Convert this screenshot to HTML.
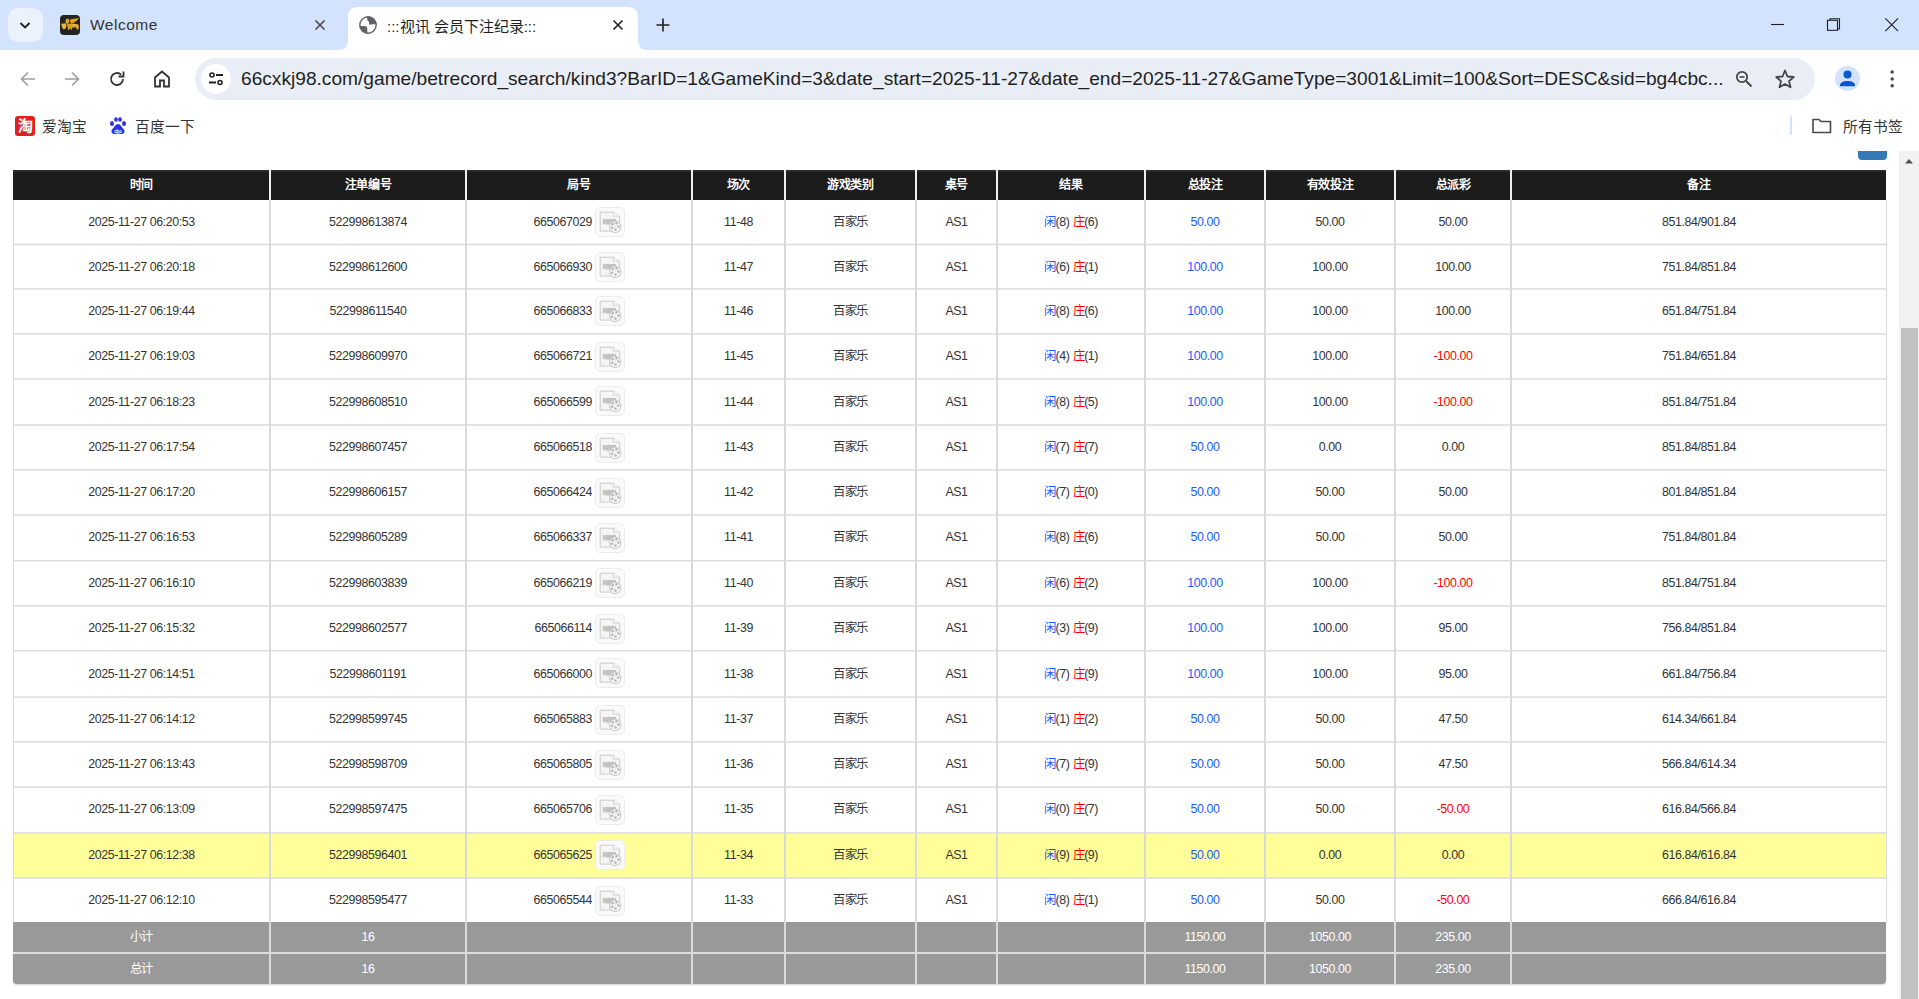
<!DOCTYPE html>
<html lang="zh-CN"><head><meta charset="utf-8"><title>:::视讯 会员下注纪录:::</title>
<style>
html,body{margin:0;padding:0;width:1919px;height:999px;overflow:hidden;background:#fff;font-family:"Liberation Sans",sans-serif;}
.a{position:absolute}
#tabstrip{position:absolute;left:0;top:0;width:1919px;height:50px;background:#d3e3fd}
#toolbar{position:absolute;left:0;top:50px;width:1921px;height:55px;background:#fff;border-radius:10px 11px 0 0}
#bm{position:absolute;left:0;top:105px;width:1919px;height:46px;background:#fff}
.tabtxt{position:absolute;font-size:15px;color:#1f1f1f;white-space:nowrap}
.c,.hc,.fc{position:absolute;text-align:center;white-space:nowrap;font-size:12.4px;letter-spacing:-0.4px;color:#333}
.hc{color:#fff;font-weight:bold;font-size:12px}
.fc{color:#fff}
.th{position:absolute}
.bl{color:#1a5cff}
.rd{color:#ff0000}
.jn{display:inline-block;vertical-align:middle;line-height:14px}
.vb{position:absolute;width:28px;height:28px;border:1px solid #ececec;border-radius:5px;background:#fafafa}
.vb svg{position:absolute;left:-1px;top:-1px}
</style></head><body>
<div id="tabstrip"></div>
<!-- dropdown -->
<div class="a" style="left:8px;top:8px;width:35px;height:34px;border-radius:10px;background:#ebf1fd"></div>
<svg class="a" style="left:17px;top:17px" width="16" height="16" viewBox="0 0 16 16"><path d="M3.5 6l4.5 4.5L12.5 6" fill="none" stroke="#1f1f1f" stroke-width="1.8"/></svg>
<!-- inactive tab -->
<div class="a" style="left:60px;top:15px;width:20px;height:20px;border-radius:4px;background:#232323;overflow:hidden"><svg width="20" height="20" viewBox="0 0 20 20"><path d="M9.5 4.8Q14 3.2 18.8 3.3Q16.5 7.2 11 8.8z" fill="#e3a51c"/><ellipse cx="7.4" cy="6.2" rx="1.9" ry="2.6" fill="#d8a62a"/><path d="M1.2 8.8L6.4 8.3L6.4 12Q4.8 14.8 3.6 14.6Q1.4 12.6 1.2 8.8z" fill="#e8b234"/><path d="M7 9.2Q12 7.8 18.2 9.4Q19.6 11 18.8 13L18 14.8H16.8L16.3 12.6H12.4L11.8 14.8H10.7L10.3 12.3L9.3 14.8H8z" fill="#d9a22a"/><path d="M12 10.2Q15 9.4 17.5 10.3" stroke="#f5d060" stroke-width="0.8" fill="none"/></svg></div>
<div class="tabtxt" style="left:90px;top:16px;font-size:15.5px;letter-spacing:0.5px;color:#333">Welcome</div>
<svg class="a" style="left:313px;top:18px" width="14" height="14" viewBox="0 0 14 14"><path d="M2.5 2.5l9 9M11.5 2.5l-9 9" stroke="#474747" stroke-width="1.6"/></svg>
<!-- active tab -->
<svg class="a" style="left:338px;top:7px" width="310" height="44" viewBox="0 0 310 44"><path d="M0 43 Q10 43 10 33 V10 Q10 0 20 0 H290 Q300 0 300 10 V33 Q300 43 310 43 V44 H0 Z" fill="#fff"/></svg>
<svg class="a" style="left:359px;top:16px" width="18" height="18" viewBox="0 0 18 18"><circle cx="9" cy="9" r="8.9" fill="#5f6368"/><circle cx="9" cy="9" r="7.5" fill="#fff"/><path d="M8.3 0.5C8.1 2.6 7.8 4.2 9.1 5.1C10.4 5.9 10.4 7.3 9.8 8.4C11.2 8.9 12.6 8.2 13.9 8.2L17.6 8.2A8.6 8.6 0 0 0 8.3 0.5z" fill="#5f6368"/><path d="M0.4 10.1C3.2 9.9 6.1 9.8 7.6 10.6C8.6 11.4 8.2 13.6 8.4 17.6A8.6 8.6 0 0 1 0.4 10.1z" fill="#5f6368"/></svg>
<div class="tabtxt" style="left:387px;top:15px;font-size:15px">:::视讯 会员下注纪录:::</div>
<svg class="a" style="left:611px;top:18px" width="14" height="14" viewBox="0 0 14 14"><path d="M2.5 2.5l9 9M11.5 2.5l-9 9" stroke="#1f1f1f" stroke-width="1.6"/></svg>
<svg class="a" style="left:655px;top:17px" width="16" height="16" viewBox="0 0 16 16"><path d="M8 1.5v13M1.5 8h13" stroke="#1f1f1f" stroke-width="1.6"/></svg>
<!-- window controls -->
<svg class="a" style="left:1770px;top:16px" width="16" height="16" viewBox="0 0 16 16"><path d="M1 8.5h13" stroke="#1f1f1f" stroke-width="1.1"/></svg>
<svg class="a" style="left:1825px;top:16px" width="16" height="16" viewBox="0 0 16 16"><rect x="2.5" y="4.3" width="10" height="10" fill="none" stroke="#1f1f1f" stroke-width="1.1"/><path d="M5 4.3V2.7h9.5v10.3h-2" fill="none" stroke="#1f1f1f" stroke-width="1.1"/></svg>
<svg class="a" style="left:1884px;top:17px" width="16" height="16" viewBox="0 0 16 16"><path d="M1.3 1.3l12.8 12.8M14.1 1.3L1.3 14.1" stroke="#1f1f1f" stroke-width="1.1"/></svg>

<div id="toolbar"></div>
<svg class="a" style="left:18px;top:69px" width="20" height="20" viewBox="0 0 20 20"><path d="M17 10H4M10 3.5L3.5 10 10 16.5" fill="none" stroke="#a0a0a0" stroke-width="1.7"/></svg>
<svg class="a" style="left:62px;top:69px" width="20" height="20" viewBox="0 0 20 20"><path d="M3 10h13M10 3.5l6.5 6.5L10 16.5" fill="none" stroke="#a0a0a0" stroke-width="1.7"/></svg>
<svg class="a" style="left:107px;top:69px" width="20" height="20" viewBox="0 0 20 20"><path d="M16 10a6 6 0 1 1-1.8-4.3" fill="none" stroke="#333" stroke-width="1.8"/><path d="M16.5 2.5v5h-5" fill="none" stroke="#333" stroke-width="1.8"/></svg>
<svg class="a" style="left:152px;top:69px" width="20" height="20" viewBox="0 0 20 20"><path d="M3 17.5V8.5L10 2.5l7 6v9h-5v-6H8v6z" fill="none" stroke="#333" stroke-width="1.8" stroke-linejoin="miter"/></svg>
<!-- omnibox -->
<div class="a" style="left:195px;top:58px;width:1620px;height:42px;border-radius:21px;background:#e9eef6"></div>
<div class="a" style="left:201px;top:64px;width:30px;height:30px;border-radius:15px;background:#fff"></div>
<svg class="a" style="left:206px;top:69px" width="20" height="20" viewBox="0 0 20 20"><circle cx="6" cy="6" r="2" fill="none" stroke="#1f1f1f" stroke-width="1.6"/><path d="M10 6h7M3 13.5h7" stroke="#1f1f1f" stroke-width="1.8"/><circle cx="14" cy="13.5" r="2" fill="none" stroke="#1f1f1f" stroke-width="1.6"/></svg>
<div class="a" id="url" style="left:241px;top:67px;font-size:19.15px;color:#1f1f1f;white-space:nowrap;line-height:24px">66cxkj98.com/game/betrecord_search/kind3?BarID=1&amp;GameKind=3&amp;date_start=2025-11-27&amp;date_end=2025-11-27&amp;GameType=3001&amp;Limit=100&amp;Sort=DESC&amp;sid=bg4cbc...</div>
<svg class="a" style="left:1734px;top:69px" width="20" height="20" viewBox="0 0 20 20"><circle cx="8" cy="8" r="5.2" fill="none" stroke="#444" stroke-width="1.8"/><path d="M12 12l5.5 5.5" stroke="#444" stroke-width="2"/><path d="M5.5 8h5" stroke="#444" stroke-width="1.6"/></svg>
<svg class="a" style="left:1774px;top:68px" width="22" height="22" viewBox="0 0 22 22"><path d="M11 2.5l2.5 6 6.3.5-4.8 4.1 1.5 6.2L11 16l-5.5 3.3 1.5-6.2L2.2 9l6.3-.5z" fill="none" stroke="#444" stroke-width="1.8" stroke-linejoin="round"/></svg>
<div class="a" style="left:1835px;top:66px;width:25px;height:25px;border-radius:13px;background:#d3e3fd;overflow:hidden"><svg width="25" height="25" viewBox="0 0 25 25"><circle cx="12.5" cy="8.6" r="4" fill="#0b57d0"/><path d="M5 20.3v-1c0-2.8 3.6-4.3 7.5-4.3s7.5 1.5 7.5 4.3v1z" fill="#0b57d0"/></svg></div>
<svg class="a" style="left:1882px;top:69px" width="20" height="20" viewBox="0 0 20 20"><circle cx="10.2" cy="3" r="1.7" fill="#444"/><circle cx="10.2" cy="10" r="1.7" fill="#444"/><circle cx="10.2" cy="16.7" r="1.7" fill="#444"/></svg>

<div id="bm"></div>
<div class="a" style="left:15px;top:116px;width:20px;height:20px;border-radius:3px;background:#e02020;color:#fff;font-size:15px;font-weight:bold;line-height:20px;text-align:center">淘</div>
<div class="a" style="left:42px;top:118px;font-size:14.7px;color:#333;line-height:18px">爱淘宝</div>
<svg class="a" style="left:108px;top:116px" width="20" height="20" viewBox="0 0 20 20"><ellipse cx="4" cy="7.5" rx="2" ry="2.5" fill="#2932e1"/><ellipse cx="8" cy="3.5" rx="1.8" ry="2.3" fill="#2932e1"/><ellipse cx="12" cy="3.5" rx="1.8" ry="2.3" fill="#2932e1"/><ellipse cx="16" cy="7.5" rx="2" ry="2.5" fill="#2932e1"/><path d="M10 8c-2.5 0-3.5 3-5.5 5s-1 5 2 5c1.5 0 2.2-.5 3.5-.5s2 .5 3.5.5c3 0 4-3 2-5s-3-5-5.5-5z" fill="#2932e1"/><text x="10" y="16.5" font-size="6" fill="#fff" text-anchor="middle" font-family="Liberation Sans" font-weight="bold">du</text></svg>
<div class="a" style="left:135px;top:118px;font-size:14.7px;color:#333;line-height:18px">百度一下</div>
<div class="a" style="left:1790px;top:116px;width:2px;height:19px;border-radius:1px;background:#d3e3fd"></div>
<svg class="a" style="left:1811px;top:116px" width="22" height="20" viewBox="0 0 22 20"><path d="M2 3.5h6l2 2h9.5v11H2z" fill="none" stroke="#474747" stroke-width="1.6" stroke-linejoin="round"/></svg>
<div class="a" style="left:1843px;top:118px;font-size:14.7px;color:#333;line-height:18px">所有书签</div>

<!-- page -->
<div class="a" style="left:1858px;top:151px;width:29px;height:9px;background:#337ab7;border-radius:0 0 4px 4px"></div>
<!-- scrollbar -->
<div class="a" style="left:1899px;top:151px;width:20px;height:848px;background:#f1f1f1"></div>
<svg class="a" style="left:1904px;top:156px" width="10" height="10" viewBox="0 0 10 10"><path d="M1 7.5h8L5 3z" fill="#505050"/></svg>
<div class="a" style="left:1901px;top:328px;width:17px;height:671px;background:#c1c1c1"></div>
<div class="th" style="left:13px;top:170px;width:1873px;height:30px;background:#1c1c1c"></div>
<div style="position:absolute;left:13px;top:170px;width:1873px;height:2px;background:#2b2b2b"></div>
<div class="hc" style="left:14px;width:255px;top:170px;height:30px;line-height:30px">时间</div>
<div class="hc" style="left:271px;width:194px;top:170px;height:30px;line-height:30px">注单编号</div>
<div class="hc" style="left:467px;width:224px;top:170px;height:30px;line-height:30px">局号</div>
<div class="hc" style="left:693px;width:91px;top:170px;height:30px;line-height:30px">场次</div>
<div class="hc" style="left:786px;width:129px;top:170px;height:30px;line-height:30px">游戏类别</div>
<div class="hc" style="left:917px;width:79px;top:170px;height:30px;line-height:30px">桌号</div>
<div class="hc" style="left:998px;width:146px;top:170px;height:30px;line-height:30px">结果</div>
<div class="hc" style="left:1146px;width:118px;top:170px;height:30px;line-height:30px">总投注</div>
<div class="hc" style="left:1266px;width:128px;top:170px;height:30px;line-height:30px">有效投注</div>
<div class="hc" style="left:1396px;width:114px;top:170px;height:30px;line-height:30px">总派彩</div>
<div class="hc" style="left:1512px;width:374px;top:170px;height:30px;line-height:30px">备注</div>
<div style="position:absolute;left:269px;top:170px;width:2px;height:30px;background:#efefef"></div>
<div style="position:absolute;left:465px;top:170px;width:2px;height:30px;background:#efefef"></div>
<div style="position:absolute;left:691px;top:170px;width:2px;height:30px;background:#efefef"></div>
<div style="position:absolute;left:784px;top:170px;width:2px;height:30px;background:#efefef"></div>
<div style="position:absolute;left:915px;top:170px;width:2px;height:30px;background:#efefef"></div>
<div style="position:absolute;left:996px;top:170px;width:2px;height:30px;background:#efefef"></div>
<div style="position:absolute;left:1144px;top:170px;width:2px;height:30px;background:#efefef"></div>
<div style="position:absolute;left:1264px;top:170px;width:2px;height:30px;background:#efefef"></div>
<div style="position:absolute;left:1394px;top:170px;width:2px;height:30px;background:#efefef"></div>
<div style="position:absolute;left:1510px;top:170px;width:2px;height:30px;background:#efefef"></div>
<div style="position:absolute;left:13px;top:200px;width:1873px;height:722px;background:#ffffff"></div>
<div style="position:absolute;left:13px;top:833px;width:1873px;height:45px;background:#ffff99"></div>
<div class="c" style="left:14px;width:255px;top:199.60px;height:44.90px;line-height:44.90px">2025-11-27 06:20:53</div>
<div class="c" style="left:271px;width:194px;top:199.60px;height:44.90px;line-height:44.90px">522998613874</div>
<div class="c" style="left:467px;width:125px;text-align:right;top:199.60px;height:44.90px;line-height:44.90px">665067029</div>
<div class="vb" style="left:595px;top:207px"><svg width="30" height="30" viewBox="0 0 30 30"><path d="M5.2 5.2h13.3l6.2 4.3v14.6h-19.5z" fill="#f5f5f5" stroke="#cbcbcb" stroke-width="1"/><path d="M18.5 5.2v4h6.2" fill="#fafafa" stroke="#d3d3d3" stroke-width="1"/><path d="M7.8 11.4l2.8 1.4v3.3l-2.8 1.6z" fill="#c2c2c2"/><path d="M10.4 11.9h3l0.5-0.4 0.5 0.4h3l0.5-0.4 0.5 0.4h2.6v5.5h-10.6z" fill="#c2c2c2"/><circle cx="20.2" cy="19.9" r="5.7" fill="#f7f7f7" stroke="#c6c6c6" stroke-width="1"/><circle cx="17.8" cy="17.2" r="1.35" fill="#b9b9b9"/><circle cx="21.4" cy="16.3" r="1.35" fill="#b9b9b9"/><circle cx="23.4" cy="19.6" r="1.35" fill="#b9b9b9"/><circle cx="20.5" cy="22.6" r="1.35" fill="#b9b9b9"/><circle cx="17.1" cy="20.8" r="1.35" fill="#b9b9b9"/><circle cx="20.1" cy="19.5" r="0.5" fill="#cfcfcf"/></svg></div>
<div class="c" style="left:693px;width:91px;top:199.60px;height:44.90px;line-height:44.90px">11-48</div>
<div class="c" style="left:786px;width:129px;top:199.60px;height:44.90px;line-height:44.90px">百家乐</div>
<div class="c" style="left:917px;width:79px;top:199.60px;height:44.90px;line-height:44.90px">AS1</div>
<div class="c" style="left:998px;width:146px;top:199.60px;height:44.90px;line-height:44.90px"><span class="bl">闲</span>(8) <span class="rd">庄</span>(6)</div>
<div class="c" style="left:1146px;width:118px;top:199.60px;height:44.90px;line-height:44.90px"><span class="bl">50.00</span></div>
<div class="c" style="left:1266px;width:128px;top:199.60px;height:44.90px;line-height:44.90px">50.00</div>
<div class="c" style="left:1396px;width:114px;top:199.60px;height:44.90px;line-height:44.90px">50.00</div>
<div class="c" style="left:1512px;width:374px;top:199.60px;height:44.90px;line-height:44.90px">851.84/901.84</div>
<div class="c" style="left:14px;width:255px;top:244.50px;height:44.40px;line-height:44.40px">2025-11-27 06:20:18</div>
<div class="c" style="left:271px;width:194px;top:244.50px;height:44.40px;line-height:44.40px">522998612600</div>
<div class="c" style="left:467px;width:125px;text-align:right;top:244.50px;height:44.40px;line-height:44.40px">665066930</div>
<div class="vb" style="left:595px;top:252px"><svg width="30" height="30" viewBox="0 0 30 30"><path d="M5.2 5.2h13.3l6.2 4.3v14.6h-19.5z" fill="#f5f5f5" stroke="#cbcbcb" stroke-width="1"/><path d="M18.5 5.2v4h6.2" fill="#fafafa" stroke="#d3d3d3" stroke-width="1"/><path d="M7.8 11.4l2.8 1.4v3.3l-2.8 1.6z" fill="#c2c2c2"/><path d="M10.4 11.9h3l0.5-0.4 0.5 0.4h3l0.5-0.4 0.5 0.4h2.6v5.5h-10.6z" fill="#c2c2c2"/><circle cx="20.2" cy="19.9" r="5.7" fill="#f7f7f7" stroke="#c6c6c6" stroke-width="1"/><circle cx="17.8" cy="17.2" r="1.35" fill="#b9b9b9"/><circle cx="21.4" cy="16.3" r="1.35" fill="#b9b9b9"/><circle cx="23.4" cy="19.6" r="1.35" fill="#b9b9b9"/><circle cx="20.5" cy="22.6" r="1.35" fill="#b9b9b9"/><circle cx="17.1" cy="20.8" r="1.35" fill="#b9b9b9"/><circle cx="20.1" cy="19.5" r="0.5" fill="#cfcfcf"/></svg></div>
<div class="c" style="left:693px;width:91px;top:244.50px;height:44.40px;line-height:44.40px">11-47</div>
<div class="c" style="left:786px;width:129px;top:244.50px;height:44.40px;line-height:44.40px">百家乐</div>
<div class="c" style="left:917px;width:79px;top:244.50px;height:44.40px;line-height:44.40px">AS1</div>
<div class="c" style="left:998px;width:146px;top:244.50px;height:44.40px;line-height:44.40px"><span class="bl">闲</span>(6) <span class="rd">庄</span>(1)</div>
<div class="c" style="left:1146px;width:118px;top:244.50px;height:44.40px;line-height:44.40px"><span class="bl">100.00</span></div>
<div class="c" style="left:1266px;width:128px;top:244.50px;height:44.40px;line-height:44.40px">100.00</div>
<div class="c" style="left:1396px;width:114px;top:244.50px;height:44.40px;line-height:44.40px">100.00</div>
<div class="c" style="left:1512px;width:374px;top:244.50px;height:44.40px;line-height:44.40px">751.84/851.84</div>
<div class="c" style="left:14px;width:255px;top:288.90px;height:45.00px;line-height:45.00px">2025-11-27 06:19:44</div>
<div class="c" style="left:271px;width:194px;top:288.90px;height:45.00px;line-height:45.00px">522998611540</div>
<div class="c" style="left:467px;width:125px;text-align:right;top:288.90px;height:45.00px;line-height:45.00px">665066833</div>
<div class="vb" style="left:595px;top:296px"><svg width="30" height="30" viewBox="0 0 30 30"><path d="M5.2 5.2h13.3l6.2 4.3v14.6h-19.5z" fill="#f5f5f5" stroke="#cbcbcb" stroke-width="1"/><path d="M18.5 5.2v4h6.2" fill="#fafafa" stroke="#d3d3d3" stroke-width="1"/><path d="M7.8 11.4l2.8 1.4v3.3l-2.8 1.6z" fill="#c2c2c2"/><path d="M10.4 11.9h3l0.5-0.4 0.5 0.4h3l0.5-0.4 0.5 0.4h2.6v5.5h-10.6z" fill="#c2c2c2"/><circle cx="20.2" cy="19.9" r="5.7" fill="#f7f7f7" stroke="#c6c6c6" stroke-width="1"/><circle cx="17.8" cy="17.2" r="1.35" fill="#b9b9b9"/><circle cx="21.4" cy="16.3" r="1.35" fill="#b9b9b9"/><circle cx="23.4" cy="19.6" r="1.35" fill="#b9b9b9"/><circle cx="20.5" cy="22.6" r="1.35" fill="#b9b9b9"/><circle cx="17.1" cy="20.8" r="1.35" fill="#b9b9b9"/><circle cx="20.1" cy="19.5" r="0.5" fill="#cfcfcf"/></svg></div>
<div class="c" style="left:693px;width:91px;top:288.90px;height:45.00px;line-height:45.00px">11-46</div>
<div class="c" style="left:786px;width:129px;top:288.90px;height:45.00px;line-height:45.00px">百家乐</div>
<div class="c" style="left:917px;width:79px;top:288.90px;height:45.00px;line-height:45.00px">AS1</div>
<div class="c" style="left:998px;width:146px;top:288.90px;height:45.00px;line-height:45.00px"><span class="bl">闲</span>(8) <span class="rd">庄</span>(6)</div>
<div class="c" style="left:1146px;width:118px;top:288.90px;height:45.00px;line-height:45.00px"><span class="bl">100.00</span></div>
<div class="c" style="left:1266px;width:128px;top:288.90px;height:45.00px;line-height:45.00px">100.00</div>
<div class="c" style="left:1396px;width:114px;top:288.90px;height:45.00px;line-height:45.00px">100.00</div>
<div class="c" style="left:1512px;width:374px;top:288.90px;height:45.00px;line-height:45.00px">651.84/751.84</div>
<div class="c" style="left:14px;width:255px;top:333.90px;height:45.00px;line-height:45.00px">2025-11-27 06:19:03</div>
<div class="c" style="left:271px;width:194px;top:333.90px;height:45.00px;line-height:45.00px">522998609970</div>
<div class="c" style="left:467px;width:125px;text-align:right;top:333.90px;height:45.00px;line-height:45.00px">665066721</div>
<div class="vb" style="left:595px;top:342px"><svg width="30" height="30" viewBox="0 0 30 30"><path d="M5.2 5.2h13.3l6.2 4.3v14.6h-19.5z" fill="#f5f5f5" stroke="#cbcbcb" stroke-width="1"/><path d="M18.5 5.2v4h6.2" fill="#fafafa" stroke="#d3d3d3" stroke-width="1"/><path d="M7.8 11.4l2.8 1.4v3.3l-2.8 1.6z" fill="#c2c2c2"/><path d="M10.4 11.9h3l0.5-0.4 0.5 0.4h3l0.5-0.4 0.5 0.4h2.6v5.5h-10.6z" fill="#c2c2c2"/><circle cx="20.2" cy="19.9" r="5.7" fill="#f7f7f7" stroke="#c6c6c6" stroke-width="1"/><circle cx="17.8" cy="17.2" r="1.35" fill="#b9b9b9"/><circle cx="21.4" cy="16.3" r="1.35" fill="#b9b9b9"/><circle cx="23.4" cy="19.6" r="1.35" fill="#b9b9b9"/><circle cx="20.5" cy="22.6" r="1.35" fill="#b9b9b9"/><circle cx="17.1" cy="20.8" r="1.35" fill="#b9b9b9"/><circle cx="20.1" cy="19.5" r="0.5" fill="#cfcfcf"/></svg></div>
<div class="c" style="left:693px;width:91px;top:333.90px;height:45.00px;line-height:45.00px">11-45</div>
<div class="c" style="left:786px;width:129px;top:333.90px;height:45.00px;line-height:45.00px">百家乐</div>
<div class="c" style="left:917px;width:79px;top:333.90px;height:45.00px;line-height:45.00px">AS1</div>
<div class="c" style="left:998px;width:146px;top:333.90px;height:45.00px;line-height:45.00px"><span class="bl">闲</span>(4) <span class="rd">庄</span>(1)</div>
<div class="c" style="left:1146px;width:118px;top:333.90px;height:45.00px;line-height:45.00px"><span class="bl">100.00</span></div>
<div class="c" style="left:1266px;width:128px;top:333.90px;height:45.00px;line-height:45.00px">100.00</div>
<div class="c" style="left:1396px;width:114px;top:333.90px;height:45.00px;line-height:45.00px"><span class="rd">-100.00</span></div>
<div class="c" style="left:1512px;width:374px;top:333.90px;height:45.00px;line-height:45.00px">751.84/651.84</div>
<div class="c" style="left:14px;width:255px;top:378.90px;height:46.10px;line-height:46.10px">2025-11-27 06:18:23</div>
<div class="c" style="left:271px;width:194px;top:378.90px;height:46.10px;line-height:46.10px">522998608510</div>
<div class="c" style="left:467px;width:125px;text-align:right;top:378.90px;height:46.10px;line-height:46.10px">665066599</div>
<div class="vb" style="left:595px;top:386px"><svg width="30" height="30" viewBox="0 0 30 30"><path d="M5.2 5.2h13.3l6.2 4.3v14.6h-19.5z" fill="#f5f5f5" stroke="#cbcbcb" stroke-width="1"/><path d="M18.5 5.2v4h6.2" fill="#fafafa" stroke="#d3d3d3" stroke-width="1"/><path d="M7.8 11.4l2.8 1.4v3.3l-2.8 1.6z" fill="#c2c2c2"/><path d="M10.4 11.9h3l0.5-0.4 0.5 0.4h3l0.5-0.4 0.5 0.4h2.6v5.5h-10.6z" fill="#c2c2c2"/><circle cx="20.2" cy="19.9" r="5.7" fill="#f7f7f7" stroke="#c6c6c6" stroke-width="1"/><circle cx="17.8" cy="17.2" r="1.35" fill="#b9b9b9"/><circle cx="21.4" cy="16.3" r="1.35" fill="#b9b9b9"/><circle cx="23.4" cy="19.6" r="1.35" fill="#b9b9b9"/><circle cx="20.5" cy="22.6" r="1.35" fill="#b9b9b9"/><circle cx="17.1" cy="20.8" r="1.35" fill="#b9b9b9"/><circle cx="20.1" cy="19.5" r="0.5" fill="#cfcfcf"/></svg></div>
<div class="c" style="left:693px;width:91px;top:378.90px;height:46.10px;line-height:46.10px">11-44</div>
<div class="c" style="left:786px;width:129px;top:378.90px;height:46.10px;line-height:46.10px">百家乐</div>
<div class="c" style="left:917px;width:79px;top:378.90px;height:46.10px;line-height:46.10px">AS1</div>
<div class="c" style="left:998px;width:146px;top:378.90px;height:46.10px;line-height:46.10px"><span class="bl">闲</span>(8) <span class="rd">庄</span>(5)</div>
<div class="c" style="left:1146px;width:118px;top:378.90px;height:46.10px;line-height:46.10px"><span class="bl">100.00</span></div>
<div class="c" style="left:1266px;width:128px;top:378.90px;height:46.10px;line-height:46.10px">100.00</div>
<div class="c" style="left:1396px;width:114px;top:378.90px;height:46.10px;line-height:46.10px"><span class="rd">-100.00</span></div>
<div class="c" style="left:1512px;width:374px;top:378.90px;height:46.10px;line-height:46.10px">851.84/751.84</div>
<div class="c" style="left:14px;width:255px;top:425.00px;height:44.90px;line-height:44.90px">2025-11-27 06:17:54</div>
<div class="c" style="left:271px;width:194px;top:425.00px;height:44.90px;line-height:44.90px">522998607457</div>
<div class="c" style="left:467px;width:125px;text-align:right;top:425.00px;height:44.90px;line-height:44.90px">665066518</div>
<div class="vb" style="left:595px;top:433px"><svg width="30" height="30" viewBox="0 0 30 30"><path d="M5.2 5.2h13.3l6.2 4.3v14.6h-19.5z" fill="#f5f5f5" stroke="#cbcbcb" stroke-width="1"/><path d="M18.5 5.2v4h6.2" fill="#fafafa" stroke="#d3d3d3" stroke-width="1"/><path d="M7.8 11.4l2.8 1.4v3.3l-2.8 1.6z" fill="#c2c2c2"/><path d="M10.4 11.9h3l0.5-0.4 0.5 0.4h3l0.5-0.4 0.5 0.4h2.6v5.5h-10.6z" fill="#c2c2c2"/><circle cx="20.2" cy="19.9" r="5.7" fill="#f7f7f7" stroke="#c6c6c6" stroke-width="1"/><circle cx="17.8" cy="17.2" r="1.35" fill="#b9b9b9"/><circle cx="21.4" cy="16.3" r="1.35" fill="#b9b9b9"/><circle cx="23.4" cy="19.6" r="1.35" fill="#b9b9b9"/><circle cx="20.5" cy="22.6" r="1.35" fill="#b9b9b9"/><circle cx="17.1" cy="20.8" r="1.35" fill="#b9b9b9"/><circle cx="20.1" cy="19.5" r="0.5" fill="#cfcfcf"/></svg></div>
<div class="c" style="left:693px;width:91px;top:425.00px;height:44.90px;line-height:44.90px">11-43</div>
<div class="c" style="left:786px;width:129px;top:425.00px;height:44.90px;line-height:44.90px">百家乐</div>
<div class="c" style="left:917px;width:79px;top:425.00px;height:44.90px;line-height:44.90px">AS1</div>
<div class="c" style="left:998px;width:146px;top:425.00px;height:44.90px;line-height:44.90px"><span class="bl">闲</span>(7) <span class="rd">庄</span>(7)</div>
<div class="c" style="left:1146px;width:118px;top:425.00px;height:44.90px;line-height:44.90px"><span class="bl">50.00</span></div>
<div class="c" style="left:1266px;width:128px;top:425.00px;height:44.90px;line-height:44.90px">0.00</div>
<div class="c" style="left:1396px;width:114px;top:425.00px;height:44.90px;line-height:44.90px">0.00</div>
<div class="c" style="left:1512px;width:374px;top:425.00px;height:44.90px;line-height:44.90px">851.84/851.84</div>
<div class="c" style="left:14px;width:255px;top:469.90px;height:45.10px;line-height:45.10px">2025-11-27 06:17:20</div>
<div class="c" style="left:271px;width:194px;top:469.90px;height:45.10px;line-height:45.10px">522998606157</div>
<div class="c" style="left:467px;width:125px;text-align:right;top:469.90px;height:45.10px;line-height:45.10px">665066424</div>
<div class="vb" style="left:595px;top:478px"><svg width="30" height="30" viewBox="0 0 30 30"><path d="M5.2 5.2h13.3l6.2 4.3v14.6h-19.5z" fill="#f5f5f5" stroke="#cbcbcb" stroke-width="1"/><path d="M18.5 5.2v4h6.2" fill="#fafafa" stroke="#d3d3d3" stroke-width="1"/><path d="M7.8 11.4l2.8 1.4v3.3l-2.8 1.6z" fill="#c2c2c2"/><path d="M10.4 11.9h3l0.5-0.4 0.5 0.4h3l0.5-0.4 0.5 0.4h2.6v5.5h-10.6z" fill="#c2c2c2"/><circle cx="20.2" cy="19.9" r="5.7" fill="#f7f7f7" stroke="#c6c6c6" stroke-width="1"/><circle cx="17.8" cy="17.2" r="1.35" fill="#b9b9b9"/><circle cx="21.4" cy="16.3" r="1.35" fill="#b9b9b9"/><circle cx="23.4" cy="19.6" r="1.35" fill="#b9b9b9"/><circle cx="20.5" cy="22.6" r="1.35" fill="#b9b9b9"/><circle cx="17.1" cy="20.8" r="1.35" fill="#b9b9b9"/><circle cx="20.1" cy="19.5" r="0.5" fill="#cfcfcf"/></svg></div>
<div class="c" style="left:693px;width:91px;top:469.90px;height:45.10px;line-height:45.10px">11-42</div>
<div class="c" style="left:786px;width:129px;top:469.90px;height:45.10px;line-height:45.10px">百家乐</div>
<div class="c" style="left:917px;width:79px;top:469.90px;height:45.10px;line-height:45.10px">AS1</div>
<div class="c" style="left:998px;width:146px;top:469.90px;height:45.10px;line-height:45.10px"><span class="bl">闲</span>(7) <span class="rd">庄</span>(0)</div>
<div class="c" style="left:1146px;width:118px;top:469.90px;height:45.10px;line-height:45.10px"><span class="bl">50.00</span></div>
<div class="c" style="left:1266px;width:128px;top:469.90px;height:45.10px;line-height:45.10px">50.00</div>
<div class="c" style="left:1396px;width:114px;top:469.90px;height:45.10px;line-height:45.10px">50.00</div>
<div class="c" style="left:1512px;width:374px;top:469.90px;height:45.10px;line-height:45.10px">801.84/851.84</div>
<div class="c" style="left:14px;width:255px;top:515.00px;height:45.80px;line-height:45.80px">2025-11-27 06:16:53</div>
<div class="c" style="left:271px;width:194px;top:515.00px;height:45.80px;line-height:45.80px">522998605289</div>
<div class="c" style="left:467px;width:125px;text-align:right;top:515.00px;height:45.80px;line-height:45.80px">665066337</div>
<div class="vb" style="left:595px;top:523px"><svg width="30" height="30" viewBox="0 0 30 30"><path d="M5.2 5.2h13.3l6.2 4.3v14.6h-19.5z" fill="#f5f5f5" stroke="#cbcbcb" stroke-width="1"/><path d="M18.5 5.2v4h6.2" fill="#fafafa" stroke="#d3d3d3" stroke-width="1"/><path d="M7.8 11.4l2.8 1.4v3.3l-2.8 1.6z" fill="#c2c2c2"/><path d="M10.4 11.9h3l0.5-0.4 0.5 0.4h3l0.5-0.4 0.5 0.4h2.6v5.5h-10.6z" fill="#c2c2c2"/><circle cx="20.2" cy="19.9" r="5.7" fill="#f7f7f7" stroke="#c6c6c6" stroke-width="1"/><circle cx="17.8" cy="17.2" r="1.35" fill="#b9b9b9"/><circle cx="21.4" cy="16.3" r="1.35" fill="#b9b9b9"/><circle cx="23.4" cy="19.6" r="1.35" fill="#b9b9b9"/><circle cx="20.5" cy="22.6" r="1.35" fill="#b9b9b9"/><circle cx="17.1" cy="20.8" r="1.35" fill="#b9b9b9"/><circle cx="20.1" cy="19.5" r="0.5" fill="#cfcfcf"/></svg></div>
<div class="c" style="left:693px;width:91px;top:515.00px;height:45.80px;line-height:45.80px">11-41</div>
<div class="c" style="left:786px;width:129px;top:515.00px;height:45.80px;line-height:45.80px">百家乐</div>
<div class="c" style="left:917px;width:79px;top:515.00px;height:45.80px;line-height:45.80px">AS1</div>
<div class="c" style="left:998px;width:146px;top:515.00px;height:45.80px;line-height:45.80px"><span class="bl">闲</span>(8) <span class="rd">庄</span>(6)</div>
<div class="c" style="left:1146px;width:118px;top:515.00px;height:45.80px;line-height:45.80px"><span class="bl">50.00</span></div>
<div class="c" style="left:1266px;width:128px;top:515.00px;height:45.80px;line-height:45.80px">50.00</div>
<div class="c" style="left:1396px;width:114px;top:515.00px;height:45.80px;line-height:45.80px">50.00</div>
<div class="c" style="left:1512px;width:374px;top:515.00px;height:45.80px;line-height:45.80px">751.84/801.84</div>
<div class="c" style="left:14px;width:255px;top:560.80px;height:45.10px;line-height:45.10px">2025-11-27 06:16:10</div>
<div class="c" style="left:271px;width:194px;top:560.80px;height:45.10px;line-height:45.10px">522998603839</div>
<div class="c" style="left:467px;width:125px;text-align:right;top:560.80px;height:45.10px;line-height:45.10px">665066219</div>
<div class="vb" style="left:595px;top:568px"><svg width="30" height="30" viewBox="0 0 30 30"><path d="M5.2 5.2h13.3l6.2 4.3v14.6h-19.5z" fill="#f5f5f5" stroke="#cbcbcb" stroke-width="1"/><path d="M18.5 5.2v4h6.2" fill="#fafafa" stroke="#d3d3d3" stroke-width="1"/><path d="M7.8 11.4l2.8 1.4v3.3l-2.8 1.6z" fill="#c2c2c2"/><path d="M10.4 11.9h3l0.5-0.4 0.5 0.4h3l0.5-0.4 0.5 0.4h2.6v5.5h-10.6z" fill="#c2c2c2"/><circle cx="20.2" cy="19.9" r="5.7" fill="#f7f7f7" stroke="#c6c6c6" stroke-width="1"/><circle cx="17.8" cy="17.2" r="1.35" fill="#b9b9b9"/><circle cx="21.4" cy="16.3" r="1.35" fill="#b9b9b9"/><circle cx="23.4" cy="19.6" r="1.35" fill="#b9b9b9"/><circle cx="20.5" cy="22.6" r="1.35" fill="#b9b9b9"/><circle cx="17.1" cy="20.8" r="1.35" fill="#b9b9b9"/><circle cx="20.1" cy="19.5" r="0.5" fill="#cfcfcf"/></svg></div>
<div class="c" style="left:693px;width:91px;top:560.80px;height:45.10px;line-height:45.10px">11-40</div>
<div class="c" style="left:786px;width:129px;top:560.80px;height:45.10px;line-height:45.10px">百家乐</div>
<div class="c" style="left:917px;width:79px;top:560.80px;height:45.10px;line-height:45.10px">AS1</div>
<div class="c" style="left:998px;width:146px;top:560.80px;height:45.10px;line-height:45.10px"><span class="bl">闲</span>(6) <span class="rd">庄</span>(2)</div>
<div class="c" style="left:1146px;width:118px;top:560.80px;height:45.10px;line-height:45.10px"><span class="bl">100.00</span></div>
<div class="c" style="left:1266px;width:128px;top:560.80px;height:45.10px;line-height:45.10px">100.00</div>
<div class="c" style="left:1396px;width:114px;top:560.80px;height:45.10px;line-height:45.10px"><span class="rd">-100.00</span></div>
<div class="c" style="left:1512px;width:374px;top:560.80px;height:45.10px;line-height:45.10px">851.84/751.84</div>
<div class="c" style="left:14px;width:255px;top:605.90px;height:44.90px;line-height:44.90px">2025-11-27 06:15:32</div>
<div class="c" style="left:271px;width:194px;top:605.90px;height:44.90px;line-height:44.90px">522998602577</div>
<div class="c" style="left:467px;width:125px;text-align:right;top:605.90px;height:44.90px;line-height:44.90px">665066114</div>
<div class="vb" style="left:595px;top:614px"><svg width="30" height="30" viewBox="0 0 30 30"><path d="M5.2 5.2h13.3l6.2 4.3v14.6h-19.5z" fill="#f5f5f5" stroke="#cbcbcb" stroke-width="1"/><path d="M18.5 5.2v4h6.2" fill="#fafafa" stroke="#d3d3d3" stroke-width="1"/><path d="M7.8 11.4l2.8 1.4v3.3l-2.8 1.6z" fill="#c2c2c2"/><path d="M10.4 11.9h3l0.5-0.4 0.5 0.4h3l0.5-0.4 0.5 0.4h2.6v5.5h-10.6z" fill="#c2c2c2"/><circle cx="20.2" cy="19.9" r="5.7" fill="#f7f7f7" stroke="#c6c6c6" stroke-width="1"/><circle cx="17.8" cy="17.2" r="1.35" fill="#b9b9b9"/><circle cx="21.4" cy="16.3" r="1.35" fill="#b9b9b9"/><circle cx="23.4" cy="19.6" r="1.35" fill="#b9b9b9"/><circle cx="20.5" cy="22.6" r="1.35" fill="#b9b9b9"/><circle cx="17.1" cy="20.8" r="1.35" fill="#b9b9b9"/><circle cx="20.1" cy="19.5" r="0.5" fill="#cfcfcf"/></svg></div>
<div class="c" style="left:693px;width:91px;top:605.90px;height:44.90px;line-height:44.90px">11-39</div>
<div class="c" style="left:786px;width:129px;top:605.90px;height:44.90px;line-height:44.90px">百家乐</div>
<div class="c" style="left:917px;width:79px;top:605.90px;height:44.90px;line-height:44.90px">AS1</div>
<div class="c" style="left:998px;width:146px;top:605.90px;height:44.90px;line-height:44.90px"><span class="bl">闲</span>(3) <span class="rd">庄</span>(9)</div>
<div class="c" style="left:1146px;width:118px;top:605.90px;height:44.90px;line-height:44.90px"><span class="bl">100.00</span></div>
<div class="c" style="left:1266px;width:128px;top:605.90px;height:44.90px;line-height:44.90px">100.00</div>
<div class="c" style="left:1396px;width:114px;top:605.90px;height:44.90px;line-height:44.90px">95.00</div>
<div class="c" style="left:1512px;width:374px;top:605.90px;height:44.90px;line-height:44.90px">756.84/851.84</div>
<div class="c" style="left:14px;width:255px;top:650.80px;height:46.30px;line-height:46.30px">2025-11-27 06:14:51</div>
<div class="c" style="left:271px;width:194px;top:650.80px;height:46.30px;line-height:46.30px">522998601191</div>
<div class="c" style="left:467px;width:125px;text-align:right;top:650.80px;height:46.30px;line-height:46.30px">665066000</div>
<div class="vb" style="left:595px;top:658px"><svg width="30" height="30" viewBox="0 0 30 30"><path d="M5.2 5.2h13.3l6.2 4.3v14.6h-19.5z" fill="#f5f5f5" stroke="#cbcbcb" stroke-width="1"/><path d="M18.5 5.2v4h6.2" fill="#fafafa" stroke="#d3d3d3" stroke-width="1"/><path d="M7.8 11.4l2.8 1.4v3.3l-2.8 1.6z" fill="#c2c2c2"/><path d="M10.4 11.9h3l0.5-0.4 0.5 0.4h3l0.5-0.4 0.5 0.4h2.6v5.5h-10.6z" fill="#c2c2c2"/><circle cx="20.2" cy="19.9" r="5.7" fill="#f7f7f7" stroke="#c6c6c6" stroke-width="1"/><circle cx="17.8" cy="17.2" r="1.35" fill="#b9b9b9"/><circle cx="21.4" cy="16.3" r="1.35" fill="#b9b9b9"/><circle cx="23.4" cy="19.6" r="1.35" fill="#b9b9b9"/><circle cx="20.5" cy="22.6" r="1.35" fill="#b9b9b9"/><circle cx="17.1" cy="20.8" r="1.35" fill="#b9b9b9"/><circle cx="20.1" cy="19.5" r="0.5" fill="#cfcfcf"/></svg></div>
<div class="c" style="left:693px;width:91px;top:650.80px;height:46.30px;line-height:46.30px">11-38</div>
<div class="c" style="left:786px;width:129px;top:650.80px;height:46.30px;line-height:46.30px">百家乐</div>
<div class="c" style="left:917px;width:79px;top:650.80px;height:46.30px;line-height:46.30px">AS1</div>
<div class="c" style="left:998px;width:146px;top:650.80px;height:46.30px;line-height:46.30px"><span class="bl">闲</span>(7) <span class="rd">庄</span>(9)</div>
<div class="c" style="left:1146px;width:118px;top:650.80px;height:46.30px;line-height:46.30px"><span class="bl">100.00</span></div>
<div class="c" style="left:1266px;width:128px;top:650.80px;height:46.30px;line-height:46.30px">100.00</div>
<div class="c" style="left:1396px;width:114px;top:650.80px;height:46.30px;line-height:46.30px">95.00</div>
<div class="c" style="left:1512px;width:374px;top:650.80px;height:46.30px;line-height:46.30px">661.84/756.84</div>
<div class="c" style="left:14px;width:255px;top:697.10px;height:44.80px;line-height:44.80px">2025-11-27 06:14:12</div>
<div class="c" style="left:271px;width:194px;top:697.10px;height:44.80px;line-height:44.80px">522998599745</div>
<div class="c" style="left:467px;width:125px;text-align:right;top:697.10px;height:44.80px;line-height:44.80px">665065883</div>
<div class="vb" style="left:595px;top:705px"><svg width="30" height="30" viewBox="0 0 30 30"><path d="M5.2 5.2h13.3l6.2 4.3v14.6h-19.5z" fill="#f5f5f5" stroke="#cbcbcb" stroke-width="1"/><path d="M18.5 5.2v4h6.2" fill="#fafafa" stroke="#d3d3d3" stroke-width="1"/><path d="M7.8 11.4l2.8 1.4v3.3l-2.8 1.6z" fill="#c2c2c2"/><path d="M10.4 11.9h3l0.5-0.4 0.5 0.4h3l0.5-0.4 0.5 0.4h2.6v5.5h-10.6z" fill="#c2c2c2"/><circle cx="20.2" cy="19.9" r="5.7" fill="#f7f7f7" stroke="#c6c6c6" stroke-width="1"/><circle cx="17.8" cy="17.2" r="1.35" fill="#b9b9b9"/><circle cx="21.4" cy="16.3" r="1.35" fill="#b9b9b9"/><circle cx="23.4" cy="19.6" r="1.35" fill="#b9b9b9"/><circle cx="20.5" cy="22.6" r="1.35" fill="#b9b9b9"/><circle cx="17.1" cy="20.8" r="1.35" fill="#b9b9b9"/><circle cx="20.1" cy="19.5" r="0.5" fill="#cfcfcf"/></svg></div>
<div class="c" style="left:693px;width:91px;top:697.10px;height:44.80px;line-height:44.80px">11-37</div>
<div class="c" style="left:786px;width:129px;top:697.10px;height:44.80px;line-height:44.80px">百家乐</div>
<div class="c" style="left:917px;width:79px;top:697.10px;height:44.80px;line-height:44.80px">AS1</div>
<div class="c" style="left:998px;width:146px;top:697.10px;height:44.80px;line-height:44.80px"><span class="bl">闲</span>(1) <span class="rd">庄</span>(2)</div>
<div class="c" style="left:1146px;width:118px;top:697.10px;height:44.80px;line-height:44.80px"><span class="bl">50.00</span></div>
<div class="c" style="left:1266px;width:128px;top:697.10px;height:44.80px;line-height:44.80px">50.00</div>
<div class="c" style="left:1396px;width:114px;top:697.10px;height:44.80px;line-height:44.80px">47.50</div>
<div class="c" style="left:1512px;width:374px;top:697.10px;height:44.80px;line-height:44.80px">614.34/661.84</div>
<div class="c" style="left:14px;width:255px;top:741.90px;height:45.20px;line-height:45.20px">2025-11-27 06:13:43</div>
<div class="c" style="left:271px;width:194px;top:741.90px;height:45.20px;line-height:45.20px">522998598709</div>
<div class="c" style="left:467px;width:125px;text-align:right;top:741.90px;height:45.20px;line-height:45.20px">665065805</div>
<div class="vb" style="left:595px;top:750px"><svg width="30" height="30" viewBox="0 0 30 30"><path d="M5.2 5.2h13.3l6.2 4.3v14.6h-19.5z" fill="#f5f5f5" stroke="#cbcbcb" stroke-width="1"/><path d="M18.5 5.2v4h6.2" fill="#fafafa" stroke="#d3d3d3" stroke-width="1"/><path d="M7.8 11.4l2.8 1.4v3.3l-2.8 1.6z" fill="#c2c2c2"/><path d="M10.4 11.9h3l0.5-0.4 0.5 0.4h3l0.5-0.4 0.5 0.4h2.6v5.5h-10.6z" fill="#c2c2c2"/><circle cx="20.2" cy="19.9" r="5.7" fill="#f7f7f7" stroke="#c6c6c6" stroke-width="1"/><circle cx="17.8" cy="17.2" r="1.35" fill="#b9b9b9"/><circle cx="21.4" cy="16.3" r="1.35" fill="#b9b9b9"/><circle cx="23.4" cy="19.6" r="1.35" fill="#b9b9b9"/><circle cx="20.5" cy="22.6" r="1.35" fill="#b9b9b9"/><circle cx="17.1" cy="20.8" r="1.35" fill="#b9b9b9"/><circle cx="20.1" cy="19.5" r="0.5" fill="#cfcfcf"/></svg></div>
<div class="c" style="left:693px;width:91px;top:741.90px;height:45.20px;line-height:45.20px">11-36</div>
<div class="c" style="left:786px;width:129px;top:741.90px;height:45.20px;line-height:45.20px">百家乐</div>
<div class="c" style="left:917px;width:79px;top:741.90px;height:45.20px;line-height:45.20px">AS1</div>
<div class="c" style="left:998px;width:146px;top:741.90px;height:45.20px;line-height:45.20px"><span class="bl">闲</span>(7) <span class="rd">庄</span>(9)</div>
<div class="c" style="left:1146px;width:118px;top:741.90px;height:45.20px;line-height:45.20px"><span class="bl">50.00</span></div>
<div class="c" style="left:1266px;width:128px;top:741.90px;height:45.20px;line-height:45.20px">50.00</div>
<div class="c" style="left:1396px;width:114px;top:741.90px;height:45.20px;line-height:45.20px">47.50</div>
<div class="c" style="left:1512px;width:374px;top:741.90px;height:45.20px;line-height:45.20px">566.84/614.34</div>
<div class="c" style="left:14px;width:255px;top:787.10px;height:45.80px;line-height:45.80px">2025-11-27 06:13:09</div>
<div class="c" style="left:271px;width:194px;top:787.10px;height:45.80px;line-height:45.80px">522998597475</div>
<div class="c" style="left:467px;width:125px;text-align:right;top:787.10px;height:45.80px;line-height:45.80px">665065706</div>
<div class="vb" style="left:595px;top:795px"><svg width="30" height="30" viewBox="0 0 30 30"><path d="M5.2 5.2h13.3l6.2 4.3v14.6h-19.5z" fill="#f5f5f5" stroke="#cbcbcb" stroke-width="1"/><path d="M18.5 5.2v4h6.2" fill="#fafafa" stroke="#d3d3d3" stroke-width="1"/><path d="M7.8 11.4l2.8 1.4v3.3l-2.8 1.6z" fill="#c2c2c2"/><path d="M10.4 11.9h3l0.5-0.4 0.5 0.4h3l0.5-0.4 0.5 0.4h2.6v5.5h-10.6z" fill="#c2c2c2"/><circle cx="20.2" cy="19.9" r="5.7" fill="#f7f7f7" stroke="#c6c6c6" stroke-width="1"/><circle cx="17.8" cy="17.2" r="1.35" fill="#b9b9b9"/><circle cx="21.4" cy="16.3" r="1.35" fill="#b9b9b9"/><circle cx="23.4" cy="19.6" r="1.35" fill="#b9b9b9"/><circle cx="20.5" cy="22.6" r="1.35" fill="#b9b9b9"/><circle cx="17.1" cy="20.8" r="1.35" fill="#b9b9b9"/><circle cx="20.1" cy="19.5" r="0.5" fill="#cfcfcf"/></svg></div>
<div class="c" style="left:693px;width:91px;top:787.10px;height:45.80px;line-height:45.80px">11-35</div>
<div class="c" style="left:786px;width:129px;top:787.10px;height:45.80px;line-height:45.80px">百家乐</div>
<div class="c" style="left:917px;width:79px;top:787.10px;height:45.80px;line-height:45.80px">AS1</div>
<div class="c" style="left:998px;width:146px;top:787.10px;height:45.80px;line-height:45.80px"><span class="bl">闲</span>(0) <span class="rd">庄</span>(7)</div>
<div class="c" style="left:1146px;width:118px;top:787.10px;height:45.80px;line-height:45.80px"><span class="bl">50.00</span></div>
<div class="c" style="left:1266px;width:128px;top:787.10px;height:45.80px;line-height:45.80px">50.00</div>
<div class="c" style="left:1396px;width:114px;top:787.10px;height:45.80px;line-height:45.80px"><span class="rd">-50.00</span></div>
<div class="c" style="left:1512px;width:374px;top:787.10px;height:45.80px;line-height:45.80px">616.84/566.84</div>
<div class="c" style="left:14px;width:255px;top:832.90px;height:45.10px;line-height:45.10px">2025-11-27 06:12:38</div>
<div class="c" style="left:271px;width:194px;top:832.90px;height:45.10px;line-height:45.10px">522998596401</div>
<div class="c" style="left:467px;width:125px;text-align:right;top:832.90px;height:45.10px;line-height:45.10px">665065625</div>
<div class="vb" style="left:595px;top:840px"><svg width="30" height="30" viewBox="0 0 30 30"><path d="M5.2 5.2h13.3l6.2 4.3v14.6h-19.5z" fill="#f5f5f5" stroke="#cbcbcb" stroke-width="1"/><path d="M18.5 5.2v4h6.2" fill="#fafafa" stroke="#d3d3d3" stroke-width="1"/><path d="M7.8 11.4l2.8 1.4v3.3l-2.8 1.6z" fill="#c2c2c2"/><path d="M10.4 11.9h3l0.5-0.4 0.5 0.4h3l0.5-0.4 0.5 0.4h2.6v5.5h-10.6z" fill="#c2c2c2"/><circle cx="20.2" cy="19.9" r="5.7" fill="#f7f7f7" stroke="#c6c6c6" stroke-width="1"/><circle cx="17.8" cy="17.2" r="1.35" fill="#b9b9b9"/><circle cx="21.4" cy="16.3" r="1.35" fill="#b9b9b9"/><circle cx="23.4" cy="19.6" r="1.35" fill="#b9b9b9"/><circle cx="20.5" cy="22.6" r="1.35" fill="#b9b9b9"/><circle cx="17.1" cy="20.8" r="1.35" fill="#b9b9b9"/><circle cx="20.1" cy="19.5" r="0.5" fill="#cfcfcf"/></svg></div>
<div class="c" style="left:693px;width:91px;top:832.90px;height:45.10px;line-height:45.10px">11-34</div>
<div class="c" style="left:786px;width:129px;top:832.90px;height:45.10px;line-height:45.10px">百家乐</div>
<div class="c" style="left:917px;width:79px;top:832.90px;height:45.10px;line-height:45.10px">AS1</div>
<div class="c" style="left:998px;width:146px;top:832.90px;height:45.10px;line-height:45.10px"><span class="bl">闲</span>(9) <span class="rd">庄</span>(9)</div>
<div class="c" style="left:1146px;width:118px;top:832.90px;height:45.10px;line-height:45.10px"><span class="bl">50.00</span></div>
<div class="c" style="left:1266px;width:128px;top:832.90px;height:45.10px;line-height:45.10px">0.00</div>
<div class="c" style="left:1396px;width:114px;top:832.90px;height:45.10px;line-height:45.10px">0.00</div>
<div class="c" style="left:1512px;width:374px;top:832.90px;height:45.10px;line-height:45.10px">616.84/616.84</div>
<div class="c" style="left:14px;width:255px;top:878.00px;height:44.30px;line-height:44.30px">2025-11-27 06:12:10</div>
<div class="c" style="left:271px;width:194px;top:878.00px;height:44.30px;line-height:44.30px">522998595477</div>
<div class="c" style="left:467px;width:125px;text-align:right;top:878.00px;height:44.30px;line-height:44.30px">665065544</div>
<div class="vb" style="left:595px;top:886px"><svg width="30" height="30" viewBox="0 0 30 30"><path d="M5.2 5.2h13.3l6.2 4.3v14.6h-19.5z" fill="#f5f5f5" stroke="#cbcbcb" stroke-width="1"/><path d="M18.5 5.2v4h6.2" fill="#fafafa" stroke="#d3d3d3" stroke-width="1"/><path d="M7.8 11.4l2.8 1.4v3.3l-2.8 1.6z" fill="#c2c2c2"/><path d="M10.4 11.9h3l0.5-0.4 0.5 0.4h3l0.5-0.4 0.5 0.4h2.6v5.5h-10.6z" fill="#c2c2c2"/><circle cx="20.2" cy="19.9" r="5.7" fill="#f7f7f7" stroke="#c6c6c6" stroke-width="1"/><circle cx="17.8" cy="17.2" r="1.35" fill="#b9b9b9"/><circle cx="21.4" cy="16.3" r="1.35" fill="#b9b9b9"/><circle cx="23.4" cy="19.6" r="1.35" fill="#b9b9b9"/><circle cx="20.5" cy="22.6" r="1.35" fill="#b9b9b9"/><circle cx="17.1" cy="20.8" r="1.35" fill="#b9b9b9"/><circle cx="20.1" cy="19.5" r="0.5" fill="#cfcfcf"/></svg></div>
<div class="c" style="left:693px;width:91px;top:878.00px;height:44.30px;line-height:44.30px">11-33</div>
<div class="c" style="left:786px;width:129px;top:878.00px;height:44.30px;line-height:44.30px">百家乐</div>
<div class="c" style="left:917px;width:79px;top:878.00px;height:44.30px;line-height:44.30px">AS1</div>
<div class="c" style="left:998px;width:146px;top:878.00px;height:44.30px;line-height:44.30px"><span class="bl">闲</span>(8) <span class="rd">庄</span>(1)</div>
<div class="c" style="left:1146px;width:118px;top:878.00px;height:44.30px;line-height:44.30px"><span class="bl">50.00</span></div>
<div class="c" style="left:1266px;width:128px;top:878.00px;height:44.30px;line-height:44.30px">50.00</div>
<div class="c" style="left:1396px;width:114px;top:878.00px;height:44.30px;line-height:44.30px"><span class="rd">-50.00</span></div>
<div class="c" style="left:1512px;width:374px;top:878.00px;height:44.30px;line-height:44.30px">666.84/616.84</div>
<div style="position:absolute;left:13px;top:243px;width:1873px;height:1px;background:rgb(247, 247, 247)"></div>
<div style="position:absolute;left:13px;top:244px;width:1873px;height:1px;background:rgb(217, 217, 217)"></div>
<div style="position:absolute;left:13px;top:245px;width:1873px;height:1px;background:rgb(247, 247, 247)"></div>
<div style="position:absolute;left:13px;top:288px;width:1873px;height:1px;background:rgb(225, 225, 225)"></div>
<div style="position:absolute;left:13px;top:289px;width:1873px;height:1px;background:rgb(232, 232, 232)"></div>
<div style="position:absolute;left:13px;top:333px;width:1873px;height:1px;background:rgb(225, 225, 225)"></div>
<div style="position:absolute;left:13px;top:334px;width:1873px;height:1px;background:rgb(232, 232, 232)"></div>
<div style="position:absolute;left:13px;top:378px;width:1873px;height:1px;background:rgb(225, 225, 225)"></div>
<div style="position:absolute;left:13px;top:379px;width:1873px;height:1px;background:rgb(232, 232, 232)"></div>
<div style="position:absolute;left:13px;top:424px;width:1873px;height:1px;background:rgb(228, 228, 228)"></div>
<div style="position:absolute;left:13px;top:425px;width:1873px;height:1px;background:rgb(228, 228, 228)"></div>
<div style="position:absolute;left:13px;top:469px;width:1873px;height:1px;background:rgb(225, 225, 225)"></div>
<div style="position:absolute;left:13px;top:470px;width:1873px;height:1px;background:rgb(232, 232, 232)"></div>
<div style="position:absolute;left:13px;top:514px;width:1873px;height:1px;background:rgb(228, 228, 228)"></div>
<div style="position:absolute;left:13px;top:515px;width:1873px;height:1px;background:rgb(228, 228, 228)"></div>
<div style="position:absolute;left:13px;top:560px;width:1873px;height:1px;background:rgb(221, 221, 221)"></div>
<div style="position:absolute;left:13px;top:561px;width:1873px;height:1px;background:rgb(236, 236, 236)"></div>
<div style="position:absolute;left:13px;top:605px;width:1873px;height:1px;background:rgb(225, 225, 225)"></div>
<div style="position:absolute;left:13px;top:606px;width:1873px;height:1px;background:rgb(232, 232, 232)"></div>
<div style="position:absolute;left:13px;top:650px;width:1873px;height:1px;background:rgb(221, 221, 221)"></div>
<div style="position:absolute;left:13px;top:651px;width:1873px;height:1px;background:rgb(236, 236, 236)"></div>
<div style="position:absolute;left:13px;top:696px;width:1873px;height:1px;background:rgb(232, 232, 232)"></div>
<div style="position:absolute;left:13px;top:697px;width:1873px;height:1px;background:rgb(225, 225, 225)"></div>
<div style="position:absolute;left:13px;top:741px;width:1873px;height:1px;background:rgb(225, 225, 225)"></div>
<div style="position:absolute;left:13px;top:742px;width:1873px;height:1px;background:rgb(232, 232, 232)"></div>
<div style="position:absolute;left:13px;top:786px;width:1873px;height:1px;background:rgb(232, 232, 232)"></div>
<div style="position:absolute;left:13px;top:787px;width:1873px;height:1px;background:rgb(225, 225, 225)"></div>
<div style="position:absolute;left:13px;top:832px;width:1873px;height:1px;background:rgb(225, 225, 225)"></div>
<div style="position:absolute;left:13px;top:833px;width:1873px;height:1px;background:rgb(232, 232, 191)"></div>
<div style="position:absolute;left:13px;top:877px;width:1873px;height:1px;background:rgb(228, 228, 198)"></div>
<div style="position:absolute;left:13px;top:878px;width:1873px;height:1px;background:rgb(228, 228, 228)"></div>
<div style="position:absolute;left:13px;top:922px;width:1873px;height:30px;background:#999999;"></div>
<div class="fc" style="left:14px;width:255px;top:922px;height:30px;line-height:30px">小计</div>
<div class="fc" style="left:271px;width:194px;top:922px;height:30px;line-height:30px">16</div>
<div class="fc" style="left:1146px;width:118px;top:922px;height:30px;line-height:30px">1150.00</div>
<div class="fc" style="left:1266px;width:128px;top:922px;height:30px;line-height:30px">1050.00</div>
<div class="fc" style="left:1396px;width:114px;top:922px;height:30px;line-height:30px">235.00</div>
<div style="position:absolute;left:13px;top:954px;width:1873px;height:30px;background:#999999;border-radius:0 0 4px 4px;box-shadow:0 1px 2px rgba(0,0,0,0.18);"></div>
<div class="fc" style="left:14px;width:255px;top:954px;height:30px;line-height:30px">总计</div>
<div class="fc" style="left:271px;width:194px;top:954px;height:30px;line-height:30px">16</div>
<div class="fc" style="left:1146px;width:118px;top:954px;height:30px;line-height:30px">1150.00</div>
<div class="fc" style="left:1266px;width:128px;top:954px;height:30px;line-height:30px">1050.00</div>
<div class="fc" style="left:1396px;width:114px;top:954px;height:30px;line-height:30px">235.00</div>
<div style="position:absolute;left:13px;top:952px;width:1873px;height:2px;background:#dedede"></div>
<div style="position:absolute;left:269px;top:200px;width:2px;height:784px;background:#dadada"></div>
<div style="position:absolute;left:465px;top:200px;width:2px;height:784px;background:#dadada"></div>
<div style="position:absolute;left:691px;top:200px;width:2px;height:784px;background:#dadada"></div>
<div style="position:absolute;left:784px;top:200px;width:2px;height:784px;background:#dadada"></div>
<div style="position:absolute;left:915px;top:200px;width:2px;height:784px;background:#dadada"></div>
<div style="position:absolute;left:996px;top:200px;width:2px;height:784px;background:#dadada"></div>
<div style="position:absolute;left:1144px;top:200px;width:2px;height:784px;background:#dadada"></div>
<div style="position:absolute;left:1264px;top:200px;width:2px;height:784px;background:#dadada"></div>
<div style="position:absolute;left:1394px;top:200px;width:2px;height:784px;background:#dadada"></div>
<div style="position:absolute;left:1510px;top:200px;width:2px;height:784px;background:#dadada"></div>
<div style="position:absolute;left:13px;top:200px;width:1px;height:722px;background:#dadada"></div>
<div style="position:absolute;left:1886px;top:200px;width:1px;height:722px;background:#dadada"></div>
</body></html>
